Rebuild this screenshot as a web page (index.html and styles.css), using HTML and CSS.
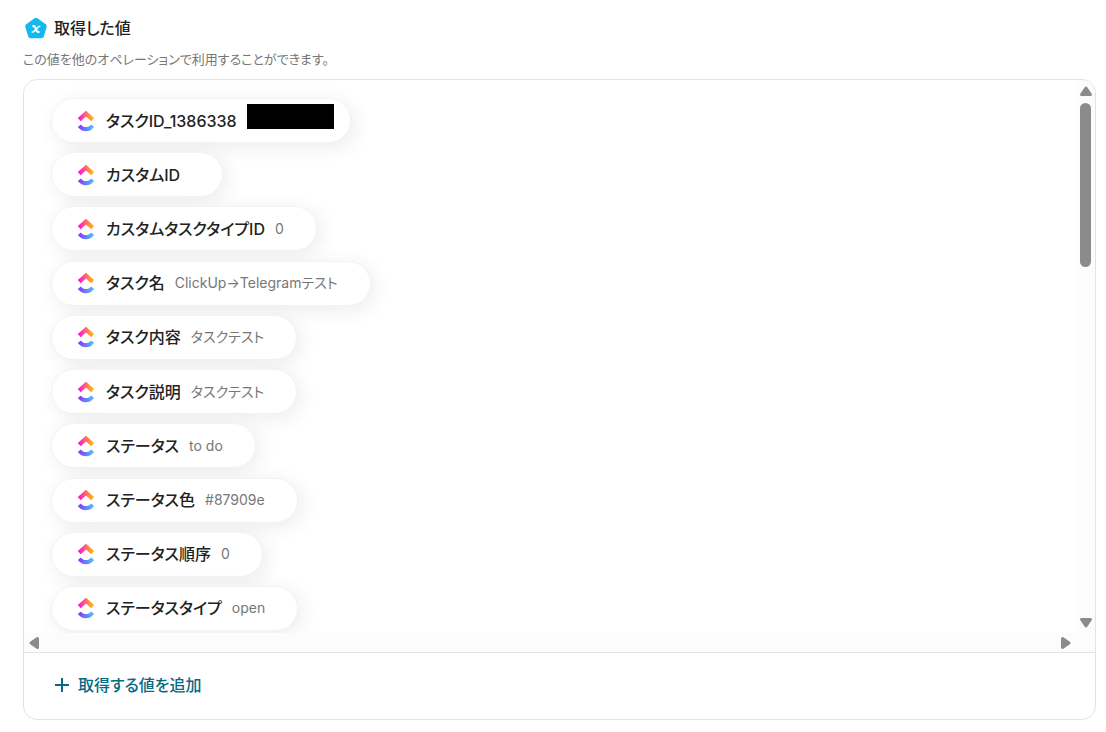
FILE: index.html
```html
<!DOCTYPE html>
<html lang="ja">
<head>
  <meta charset="UTF-8" />
  <meta name="viewport" content="width=device-width, initial-scale=1.0"/>
  <title>取得した値</title>
  <link rel="stylesheet" href="styles.css">
</head>
<body>
  <svg class="defs" aria-hidden="true">
    <defs>
      <linearGradient id="warm" x1="0" x2="1" y1="0" y2="0">
        <stop offset="0" stop-color="#ff02f0"/>
        <stop offset="0.5" stop-color="#ff6a6a"/>
        <stop offset="1" stop-color="#ffc800"/>
      </linearGradient>
      <linearGradient id="cool" x1="0" x2="1" y1="0" y2="0">
        <stop offset="0" stop-color="#8930fd"/>
        <stop offset="1" stop-color="#49ccf9"/>
      </linearGradient>
      <symbol id="clickup" viewBox="0 0 18 22">
        <path fill="url(#warm)" d="M9 .8 17.200 8 14.300 11.200 9 6.600 3.700 11.200.8 8z"/>
        <path fill="url(#cool)" d="M.8 17 3.900 14.500C5.400 16.300 7 17.100 9 17.100s3.600-.8 5.100-2.600L17.200 17C15 19.800 12.200 21.200 9 21.200S3 19.800.8 17z"/>
      </symbol>
    </defs>
  </svg>

  <header class="heading">
    <svg class="badge" viewBox="0 0 24 24" aria-hidden="true">
      <path fill="#13b9eb" stroke="#13b9eb" stroke-width="5" stroke-linejoin="round" d="M12 4.200 20.300 10.200 17.400 19.800H6.600L3.700 10.200z"/>
      <path fill="none" stroke="#fff" stroke-width="1.500" stroke-linecap="round" stroke-linejoin="round" d="M15.800 10.200C13.500 9.700 11.500 16.500 8.200 16"/>
      <path fill="none" stroke="#fff" stroke-width="2.200" stroke-linecap="round" stroke-linejoin="round" d="M9.300 10.200h.9c1.300 0 2.200 5.800 3.500 5.800h1"/>
    </svg>
    <h2>取得した値</h2>
  </header>
  <p class="note">この値を他のオペレーションで利用することができます。</p>

  <section class="panel">
    <div class="scroll-area">
      <ul class="values">
        <li class="pill masked"><svg class="logo"><use href="#clickup"/></svg><span class="name">タスクID_1386338</span><span class="mask"></span></li>
        <li class="pill"><svg class="logo"><use href="#clickup"/></svg><span class="name">カスタムID</span><span class="value"></span></li>
        <li class="pill"><svg class="logo"><use href="#clickup"/></svg><span class="name">カスタムタスクタイプID</span><span class="value">0</span></li>
        <li class="pill"><svg class="logo"><use href="#clickup"/></svg><span class="name">タスク名</span><span class="value">ClickUp→Telegramテスト</span></li>
        <li class="pill"><svg class="logo"><use href="#clickup"/></svg><span class="name">タスク内容</span><span class="value">タスクテスト</span></li>
        <li class="pill"><svg class="logo"><use href="#clickup"/></svg><span class="name">タスク説明</span><span class="value">タスクテスト</span></li>
        <li class="pill"><svg class="logo"><use href="#clickup"/></svg><span class="name">ステータス</span><span class="value">to do</span></li>
        <li class="pill"><svg class="logo"><use href="#clickup"/></svg><span class="name">ステータス色</span><span class="value">#87909e</span></li>
        <li class="pill"><svg class="logo"><use href="#clickup"/></svg><span class="name">ステータス順序</span><span class="value">0</span></li>
        <li class="pill"><svg class="logo"><use href="#clickup"/></svg><span class="name">ステータスタイプ</span><span class="value">open</span></li>
      </ul>
      <div class="bar-y">
        <button class="arrow" aria-label="上へ"><svg viewBox="0 0 14 12"><path d="M7 3 11.500 9.500h-9z"/></svg></button>
        <div class="thumb"></div>
        <button class="arrow last" aria-label="下へ"><svg viewBox="0 0 14 12"><path d="M2.500 2.500h9L7 9z"/></svg></button>
      </div>
      <div class="bar-x">
        <button class="arrow" aria-label="左へ"><svg viewBox="0 0 12 14"><path d="M9.500 2.500v9L3 7z"/></svg></button>
        <button class="arrow" aria-label="右へ"><svg viewBox="0 0 12 14"><path d="M2.500 2.500 9 7l-6.500 4.500z"/></svg></button>
      </div>
    </div>
    <div class="footer">
      <button class="add">
        <svg viewBox="0 0 16 16" aria-hidden="true"><path d="M8 1v14M1 8h14"/></svg>
        取得する値を追加
      </button>
    </div>
  </section>
</body>
</html>
```

FILE: styles.css
```css
* {
  box-sizing: border-box;
}

body {
  margin: 0;
  padding: 16px 10px 12px 23px;
  background: #fff;
  color: #222;
  font-family: Inter, "Noto Sans CJK JP", sans-serif;
  font-feature-settings: "palt";
}

button {
  padding: 0;
  border: none;
  background: none;
  font: inherit;
  font-feature-settings: inherit;
  cursor: pointer;
}

.defs {
  position: absolute;
  width: 0;
  height: 0;
}

.heading {
  display: flex;
  align-items: center;
  gap: 6px;
  height: 24px;
  padding-left: 1px;
}

.badge {
  width: 24px;
  height: 24px;
}

h2 {
  margin: 0;
  font-size: 16px;
  line-height: 24px;
  font-weight: 500;
}

.note {
  margin: 9px 0;
  color: #777;
  font-size: 13px;
  line-height: 21px;
}

.panel {
  border: 1px solid #e3e3e3;
  border-radius: 14px;
  overflow: hidden;
}

.scroll-area {
  display: grid;
  grid-template-columns: 1fr 19px;
  grid-template-rows: auto 19px;
  border-bottom: 1px solid #e3e3e3;
}

.values {
  display: flex;
  flex-direction: column;
  justify-content: space-between;
  align-items: flex-start;
  height: 553px;
  margin: 0;
  padding: 18px 27px 2px;
  list-style: none;
  overflow: hidden;
}

.pill {
  display: flex;
  align-items: center;
  height: 45px;
  padding: 0 32px 0 25px;
  border: 1px solid #f3f3f3;
  border-radius: 23px;
  background: #fff;
  box-shadow: 4px 4px 20px rgba(0, 0, 0, 0.08);
  white-space: nowrap;
}

.logo {
  width: 18px;
  height: 22px;
  margin-right: 11px;
}

.name {
  margin-right: 10px;
  font-size: 16px;
  line-height: 24px;
  font-weight: 500;
}

.value {
  color: #777;
  font-size: 14px;
  line-height: 24px;
}

.masked {
  padding-right: 16px;
}

.mask {
  width: 87px;
  height: 25px;
  margin-bottom: 9px;
  background: #000;
}

.bar-y {
  grid-row: 1 / 3;
  grid-column: 2;
  display: flex;
  flex-direction: column;
  align-items: center;
  padding: 5px 0 23px;
  background: #fcfcfc;
}

.bar-x {
  grid-row: 2;
  grid-column: 1;
  display: flex;
  align-items: center;
  justify-content: space-between;
  padding: 0 4px;
  background: #fcfcfc;
}

.arrow {
  display: flex;
}

.arrow svg {
  width: 14px;
  height: 12px;
  fill: #8b8b8b;
  stroke: #8b8b8b;
  stroke-width: 3;
  stroke-linejoin: round;
}

.bar-x .arrow svg {
  width: 12px;
  height: 14px;
}

.thumb {
  width: 11px;
  height: 164px;
  margin-top: 6px;
  border-radius: 6px;
  background: #8b8b8b;
}

.last {
  margin-top: auto;
}

.footer {
  padding: 20px 30px 22px;
}

.add {
  display: flex;
  align-items: center;
  gap: 8px;
  color: #066a84;
  font-size: 16px;
  line-height: 24px;
  font-weight: 500;
}

.add svg {
  width: 16px;
  height: 16px;
  fill: none;
  stroke: #066a84;
  stroke-width: 2;
}
```
